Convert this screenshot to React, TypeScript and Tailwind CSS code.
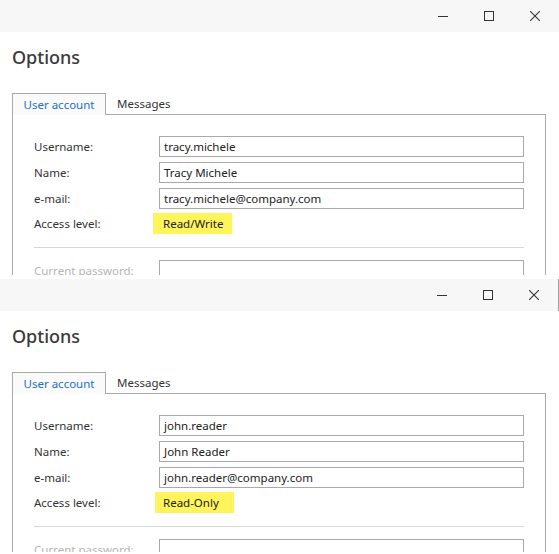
import React from "react";

type Account = {
    username: string;
    name: string;
    email: string;
    access: string;
    hl: string;
};

const font = { fontFamily: '"Noto Sans", "Open Sans", sans-serif' };

const TitleBar = ({ edge }: { edge?: boolean }) => (
    <div className={`flex h-[32px] items-center justify-end bg-[#f7f7f7] pr-[1px] ${edge ? "border-r border-[#a0a0a0]" : ""}`}>
        <div className="flex h-full w-[46px] items-center justify-center">
            <svg width="10" height="10" viewBox="0 0 10 10">
                <path d="M0 5.5h10" stroke="#333" strokeWidth="1" />
            </svg>
        </div>
        <div className="flex h-full w-[46px] items-center justify-center">
            <svg width="10" height="10" viewBox="0 0 10 10">
                <rect x="0.5" y="0.5" width="9" height="9" fill="none" stroke="#333" strokeWidth="1" />
            </svg>
        </div>
        <div className="flex h-full w-[46px] items-center justify-center">
            <svg width="10" height="10" viewBox="0 0 10 10">
                <path d="M0 0L10 10M10 0L0 10" stroke="#333" strokeWidth="1.1" />
            </svg>
        </div>
    </div>
);

const Field = ({ label, value }: { label: string; value: string }) => (
    <div className="flex h-[21px] items-center">
        <span className="w-[125px] shrink-0 text-[#333]">{label}</span>
        <div className="flex h-[21px] w-[365px] shrink-0 items-center border border-[#a9a9a9] bg-white px-[4px] text-[#222]">
            {value}
        </div>
    </div>
);

const Window = ({ account, bodyH, edge }: { account: Account; bodyH: string; edge?: boolean }) => (
    <div className="bg-white">
        <TitleBar edge={edge} />
        <div className={`overflow-hidden px-[12px] text-[11.5px] ${bodyH}`}>
            <h1 className="mt-[13px] text-[18px] leading-[24px] font-medium text-[#3a3a3a]">Options</h1>

            <div className="mt-[24px] flex">
                <div className="flex h-[22px] w-[94px] items-center justify-center border border-b-0 border-[#a9a9a9] bg-[#fafafa] text-[#1a6fc4]">
                    User account
                </div>
                <div className="flex h-[22px] flex-1 items-center border-b border-[#a9a9a9]">
                    <span className="pl-[11px] text-[#333]">Messages</span>
                </div>
                <div className="w-[1px]" />
            </div>

            <div className="mr-[1px] h-[200px] border border-t-0 border-[#a9a9a9] px-[21px] pt-[21px]">
                <div className="flex flex-col gap-[5px]">
                    <Field label="Username:" value={account.username} />
                    <Field label="Name:" value={account.name} />
                    <Field label="e-mail:" value={account.email} />
                </div>
                <div className="mt-[4px] flex h-[21px] items-center">
                    <span className="w-[125px] shrink-0 text-[#333]">Access level:</span>
                    <span className={`flex h-[21px] w-[79px] items-center bg-[#fff45c] text-[#222] ${account.hl}`}>
                        {account.access}
                    </span>
                </div>
                <div className="mt-[13px] h-px w-[490px] bg-[#d6d6d6]" />
                <div className="mt-[12px] flex h-[21px] items-center">
                    <span className="w-[125px] shrink-0 text-[#b4b4b4]">Current password:</span>
                    <div className="h-[21px] w-[365px] shrink-0 border border-[#a9a9a9]" />
                </div>
            </div>
        </div>
    </div>
);

export default function App() {
    return (
        <div className="h-[554px] w-[559px] overflow-hidden bg-white" style={font}>
            <div className="h-[279px] overflow-hidden">
                <Window
                    bodyH="h-[243px]"
                    account={{
                        username: "tracy.michele",
                        name: "Tracy Michele",
                        email: "tracy.michele@company.com",
                        access: "Read/Write",
                        hl: "-ml-[6px] pl-[10px]",
                    }}
                />
            </div>
            <div className="h-[275px] overflow-hidden">
                <Window
                    edge
                    bodyH="h-[241px]"
                    account={{
                        username: "john.reader",
                        name: "John Reader",
                        email: "john.reader@company.com",
                        access: "Read-Only",
                        hl: "-ml-[4px] pl-[8px]",
                    }}
                />
            </div>
        </div>
    );
}
